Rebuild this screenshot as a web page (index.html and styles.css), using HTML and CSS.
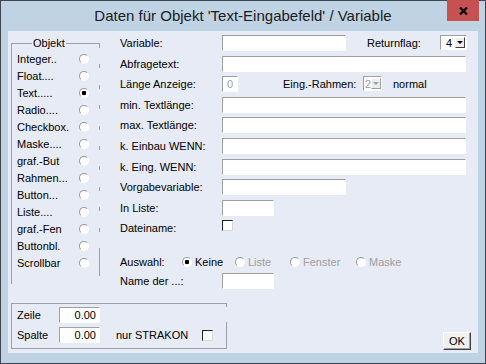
FILE: index.html
```html
<!DOCTYPE html>
<html lang="de">
<head>
<meta charset="utf-8">
<title>Daten für Objekt</title>
<link rel="stylesheet" href="styles.css">
</head>
<body>
<div class="win">
  <div class="titlebar">
    <div class="title">Daten für Objekt 'Text-Eingabefeld' / Variable</div>
    <div class="close"><svg width="9" height="8" viewBox="0 0 9 8"><path d="M1 0.5 L8 7.5 M8 0.5 L1 7.5" stroke="#000" stroke-width="2.2"/></svg></div>
  </div>
  <div class="client">
    <div class="top">
      <div class="group objekt">
        <div class="gtitle">Objekt</div>
        <div class="orow"><span>Integer..</span><i class="radio"></i></div>
        <div class="orow"><span>Float....</span><i class="radio"></i></div>
        <div class="orow"><span>Text.....</span><i class="radio on"></i></div>
        <div class="orow"><span>Radio....</span><i class="radio"></i></div>
        <div class="orow"><span>Checkbox.</span><i class="radio"></i></div>
        <div class="orow"><span>Maske....</span><i class="radio"></i></div>
        <div class="orow"><span>graf.-But</span><i class="radio"></i></div>
        <div class="orow"><span>Rahmen...</span><i class="radio"></i></div>
        <div class="orow"><span>Button...</span><i class="radio"></i></div>
        <div class="orow"><span>Liste....</span><i class="radio"></i></div>
        <div class="orow"><span>graf.-Fen</span><i class="radio"></i></div>
        <div class="orow"><span>Buttonbl.</span><i class="radio"></i></div>
        <div class="orow"><span>Scrollbar</span><i class="radio"></i></div>
      </div>
      <div class="form">
        <div class="row">
          <span class="lbl">Variable:</span><span class="inp w124"></span>
          <span class="lbl ret">Returnflag:</span>
          <span class="combo cret"><span class="cv">4</span><span class="cb"><i class="arrow"></i></span></span>
        </div>
        <div class="row"><span class="lbl">Abfragetext:</span><span class="inp w244"></span></div>
        <div class="row">
          <span class="lbl">Länge Anzeige:</span><span class="inp w16 dis">0</span>
          <span class="lbl eing">Eing.-Rahmen:</span>
          <span class="combo crah dis"><span class="cv">2</span><span class="cb"><i class="arrow"></i></span></span>
          <span class="lbl normal">normal</span>
        </div>
        <div class="row"><span class="lbl">min. Textlänge:</span><span class="inp w244"></span></div>
        <div class="row"><span class="lbl">max. Textlänge:</span><span class="inp w244"></span></div>
        <div class="row"><span class="lbl">k. Einbau WENN:</span><span class="inp w244"></span></div>
        <div class="row"><span class="lbl">k. Eing. WENN:</span><span class="inp w244"></span></div>
        <div class="row"><span class="lbl">Vorgabevariable:</span><span class="inp w124"></span></div>
        <div class="row"><span class="lbl">In Liste:</span><span class="inp w52"></span></div>
        <div class="row"><span class="lbl">Dateiname:</span><span class="chk"></span></div>
        <div class="row aus">
          <span class="lbl auslbl">Auswahl:</span>
          <span class="opt o1"><i class="radio on"></i>Keine</span>
          <span class="opt o2 off"><i class="radio"></i>Liste</span>
          <span class="opt o3 off"><i class="radio"></i>Fenster</span>
          <span class="opt off"><i class="radio"></i>Maske</span>
        </div>
        <div class="row name"><span class="lbl">Name der ...:</span><span class="inp w52"></span></div>
      </div>
    </div>
    <div class="bottom">
      <div class="group pos">
        <div class="prow"><span class="plbl">Zeile</span><span class="inp num">0.00</span></div>
        <div class="prow"><span class="plbl">Spalte</span><span class="inp num">0.00</span><span class="strak">nur STRAKON</span><span class="chk"></span></div>
      </div>
      <button class="ok">OK</button>
    </div>
  </div>
</div>
</body>
</html>
```
FILE: styles.css
```css
* { box-sizing: border-box; }
html, body { margin: 0; padding: 0; }
body {
  width: 486px;
  height: 364px;
  overflow: hidden;
  font-family: "Liberation Sans", Arial, sans-serif;
  font-size: 11px;
  color: #000;
  background: #bcd1e3;
}
.win {
  width: 486px;
  height: 364px;
  border: 1px solid #3f4650;
  background: #bfd3e5;
  display: flex;
  flex-direction: column;
}
.titlebar {
  flex: none;
  height: 30px;
  display: grid;
}
.title, .close { grid-area: 1 / 1; }
.title {
  font-size: 15px;
  line-height: 30px;
  text-align: center;
  color: #1b1b1b;
}
.close {
  justify-self: end;
  align-self: start;
  width: 32px;
  height: 21px;
  margin: -1px 6px 0 0;
  background: #c75050;
  display: flex;
  align-items: center;
  justify-content: center;
  padding-top: 1px;
}
.client {
  flex: none;
  height: 322px;
  margin: 0 7px 10px;
  background: #e6ebf5;
  display: flex;
  flex-direction: column;
}
.top {
  flex: none;
  height: 268px;
  display: flex;
  align-items: flex-start;
  padding-top: 4px;
}
.group { border: 1px solid #a0a0a0; }
.objekt {
  flex: none;
  margin: 8px 0 0 3px;
  width: 89px;
  height: 241px;
  border-right: none;
  border-bottom: none;
  background-image: linear-gradient(#a0a0a0, #a0a0a0),
    repeating-linear-gradient(to bottom, #a0a0a0 0 4px, transparent 4px 20.4px);
  background-size: 1px 28px, 1px 204px;
  background-position: right 0 top 204px, right 0 top 0;
  background-repeat: no-repeat;
}
.gtitle {
  width: max-content;
  margin: -7px 0 0 20px;
  padding: 0 1px;
  line-height: 13px;
  background: #e6ebf5;
}
.orow {
  display: flex;
  align-items: center;
  height: 17px;
  padding: 0 11px 0 5px;
}
.orow span { flex: 1; white-space: nowrap; }
.radio {
  flex: none;
  display: block;
  width: 10px;
  height: 10px;
  border-radius: 50%;
  background: #fff;
  border: 1px solid;
  border-color: #9a9a9a #fff #fff #9a9a9a;
}
.radio.on { background: radial-gradient(circle, #000 0 2px, #fff 2.6px); }
.form {
  flex: none;
  margin-left: 20px;
}
.row {
  display: flex;
  align-items: flex-start;
  height: 20.6px;
}
.lbl {
  flex: none;
  width: 102px;
  line-height: 16px;
  white-space: nowrap;
}
.inp {
  flex: none;
  display: block;
  height: 16px;
  background: #fff;
  border: 1px solid;
  border-color: #a0a0a0 #fff #fff #a0a0a0;
  line-height: 14px;
}
.w124 { width: 124px; }
.w244 { width: 244px; }
.w16 { width: 16px; }
.w52 { width: 52px; }
.inp.dis { color: #a0a0a0; text-align: center; }
.ret { width: 73px; margin-left: 21px; }
.eing { width: 80px; margin-left: 45px; }
.normal { width: auto; margin-left: 11px; }
.combo {
  flex: none;
  display: flex;
  height: 15px;
  background: #fff;
  border: 1px solid;
  border-color: #a0a0a0 #fff #fff #a0a0a0;
  padding: 1px 1px 1px 0;
}
.cret { width: 27px; }
.crah { width: 19px; }
.cv {
  flex: 1;
  line-height: 12px;
  text-align: right;
  padding-right: 3px;
}
.combo.dis .cv { text-align: left; padding: 0 0 0 1px; color: #a0a0a0; }
.cb {
  flex: none;
  width: 10px;
  background: #ececec;
  border: 1px solid;
  border-color: #fff #404040 #404040 #fff;
  display: flex;
  align-items: center;
  justify-content: center;
}
.arrow {
  display: block;
  width: 0;
  height: 0;
  border-left: 3px solid transparent;
  border-right: 3px solid transparent;
  border-top: 3px solid #000;
}
.combo.dis .cb { border-color: #fff #a0a0a0 #a0a0a0 #fff; }
.combo.dis .arrow { border-top-color: #a0a0a0; }
.chk {
  flex: none;
  display: block;
  width: 11px;
  height: 11px;
  background: #fff;
  border: 1px solid;
  border-color: #202020 #d8d8d8 #d8d8d8 #202020;
}
.row.aus {
  height: 16px;
  margin-top: 13px;
  align-items: center;
}
.auslbl { width: 62px; }
.opt {
  flex: none;
  display: flex;
  align-items: center;
  gap: 3px;
  line-height: 16px;
}
.o1 { width: 53px; }
.o2 { width: 55px; }
.o3 { width: 66px; }
.opt.off { color: #a0a0a0; }
.row.name { height: 16px; margin-top: 3px; }
.bottom {
  flex: none;
  height: 51px;
  display: flex;
  align-items: flex-end;
  padding-left: 3px;
}
.pos {
  flex: none;
  width: 216px;
  height: 46px;
  margin-bottom: 1px;
  padding: 3px 0 0 5px;
  border-right: none;
  background-image: linear-gradient(#a0a0a0, #a0a0a0), linear-gradient(#a0a0a0, #a0a0a0);
  background-size: 1px 3px, 1px 26px;
  background-position: right 0 top 0, right 0 top 18px;
  background-repeat: no-repeat;
}
.prow {
  display: flex;
  align-items: center;
  height: 16px;
}
.prow + .prow { margin-top: 4px; }
.plbl { flex: none; width: 42px; }
.inp.num { width: 41px; text-align: right; padding-right: 3px; }
.strak { flex: none; width: 86px; margin-left: 16px; }
.ok {
  flex: none;
  margin: 0 7px 0 auto;
  width: 28px;
  height: 18px;
  padding: 0;
  font-family: "Liberation Sans", Arial, sans-serif;
  font-size: 11px;
  color: #000;
  background: #f0f0f0;
  border: 1px solid;
  border-color: #fff #404040 #404040 #fff;
  box-shadow: inset -1px -1px 0 #a0a0a0;
}
```
